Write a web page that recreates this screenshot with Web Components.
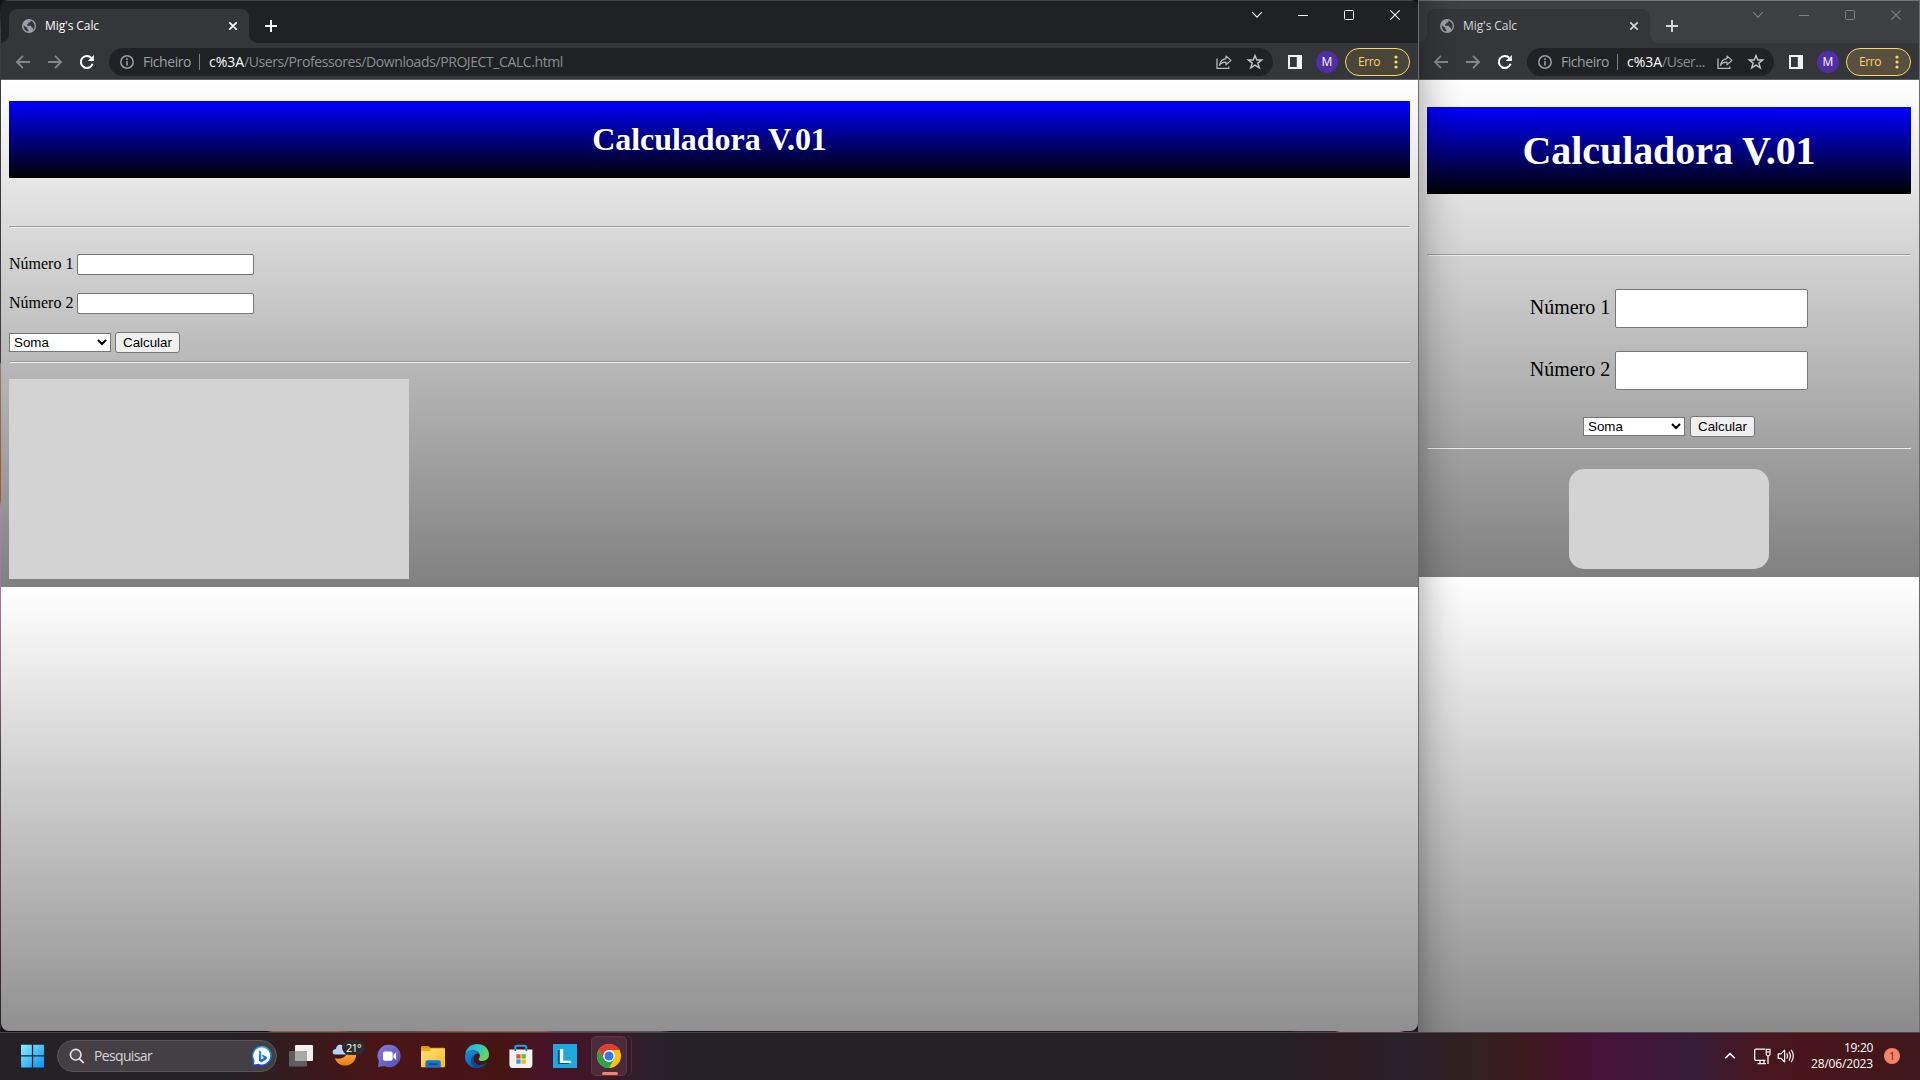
<!DOCTYPE html>
<html lang="pt">
<head>
<meta charset="utf-8">
<title>Mig's Calc</title>
<style>
html,body{margin:0;width:1920px;height:1080px;overflow:hidden}
</style>
</head>
<body>
<desk-top>
  <browser-window>
    <span slot="path">/Users/Professores/Downloads/PROJECT_CALC.html</span>
    <calc-page></calc-page>
  </browser-window>
  <browser-window inactive>
    <span slot="path">/User...</span>
    <calc-page compact></calc-page>
  </browser-window>
  <task-bar slot="bar"></task-bar>
</desk-top>
<script>
const define = (name, html, setup) => {
  const t = document.createElement('template');
  t.innerHTML = html;
  customElements.define(name, class extends HTMLElement {
    constructor() {
      super();
      this.attachShadow({mode: 'open'}).append(t.content.cloneNode(true));
    }
    connectedCallback() { if (setup) setup(this, this.shadowRoot); }
  });
};

/* Text label whose letter spacing is tuned so that it spans a given width. */
define('fit-text', `<style>:host{display:block;white-space:nowrap;flex:none}span{display:inline-block}</style><span><slot></slot></span>`, (el, root) => {
  const target = +el.getAttribute('w');
  const s = root.querySelector('span');
  el.style.width = target + 'px';
  const w = s.getBoundingClientRect().width;
  const n = el.textContent.length;
  if (w && n) s.style.letterSpacing = ((target - w) / n).toFixed(3) + 'px';
});

const ICONS = {
  globe: [14, '<circle cx="7" cy="7" r="7" fill="#9aa0a6"/><path d="M1.6 6.2 4.2 8.2 5.2 8.6 5.2 10 6.4 10.8V12.6A5.7 5.7 0 0 1 1.6 6.2zM8.6 1.6V2.6L7.8 3.6H6.2L6.4 5 5 5.6V6.8H8.8L9.8 8.4 11.2 9.2 11 11.2A5.8 5.8 0 0 0 8.6 1.6z" fill="#35363a"/>'],
  close: [10, '<path d="M1.3 1.3 8.7 8.7M8.7 1.3 1.3 8.7" stroke="currentColor" stroke-width="1.7" fill="none"/>'],
  plus: [12, '<path d="M6 0V12M0 6H12" stroke="currentColor" stroke-width="1.9"/>'],
  chevron: [12, '<path d="M1.2 3.2 6 8.2 10.8 3.2" stroke="currentColor" stroke-width="1.1" fill="none"/>'],
  minimize: [10, '<path d="M0 5.5H10" stroke="currentColor" stroke-width="1"/>'],
  maximize: [10, '<rect x=".5" y=".5" width="9" height="9" rx="1" stroke="currentColor" fill="none"/>'],
  exit: [10, '<path d="M.3.3 9.7 9.7M9.7.3.3 9.7" stroke="currentColor" stroke-width="1.15" fill="none"/>'],
  back: [14, '<path d="M14 7H1M7 .8.9 7 7 13.2" stroke="currentColor" stroke-width="1.8" fill="none"/>'],
  forward: [14, '<path d="M0 7H13M7 .8 13.1 7 7 13.2" stroke="currentColor" stroke-width="1.8" fill="none"/>'],
  reload: [16, '<path d="M13.6 9.8A6 6 0 1 1 12.4 4" stroke="currentColor" stroke-width="2" fill="none"/><path d="M14.9 1V7.1H8.8z" fill="currentColor"/>'],
  info: [14, '<circle cx="7" cy="7" r="6.2" stroke="currentColor" stroke-width="1.5" fill="none"/><path d="M7 6V10.6M7 3.3V4.9" stroke="currentColor" stroke-width="1.6"/>'],
  share: [16, '<path d="M1 4.5V14.4H12.8V12.4" stroke="currentColor" stroke-width="1.3" fill="none"/><path d="M10 2 15 6.4 10 10.8V8.2C7 8.1 5 9 3.4 11.3 4 7.6 6.4 5.2 10 4.6z" stroke="currentColor" stroke-width="1.2" fill="none" stroke-linejoin="round"/>'],
  star: [16, '<path d="M8 1.6 9.8 6H14.7L10.8 9.1 12.3 13.9 8 11.1 3.7 13.9 5.2 9.1 1.3 6H6.2z" stroke="currentColor" stroke-width="1.4" fill="none"/>'],
  panel: [14, '<path fill-rule="evenodd" d="M0 0H14V14H0zM2 2V12H8.8V2z" fill="#f1f3f4"/>'],
  dots: [14, '<g fill="currentColor"><circle cx="7" cy="2" r="1.6"/><circle cx="7" cy="7" r="1.6"/><circle cx="7" cy="12" r="1.6"/></g>'],
  start: [24, '<defs><linearGradient id="g" x1="0" y1="0" x2="1" y2="1"><stop offset="0" stop-color="#8bf0ff"/><stop offset="1" stop-color="#0a8df5"/></linearGradient></defs><path d="M.2.8H10.9V11.3H0V1zM12.2.8H23L23 11.3H12.2zM0 12.6H10.9V23.4H.2zM12.2 12.6H23V23.4H12.2z" fill="url(#g)"/>'],
  search: [16, '<circle cx="6.7" cy="6.7" r="5.3" stroke="#e8e4e8" stroke-width="1.6" fill="#ffffff18"/><path d="M10.6 10.8 14.8 15.2" stroke="#e8e4e8" stroke-width="1.8"/>'],
  bing: [20, '<defs><linearGradient id="g" x1="0" y1="0" x2="0" y2="1"><stop offset="0" stop-color="#2aa5e8"/><stop offset="1" stop-color="#1653df"/></linearGradient></defs><path d="M10.2.8A9.2 9.2 0 1 1 6 18.4L1 19.3 1.8 14.4A9.2 9.2 0 0 1 10.2.8z" fill="#fff" stroke="url(#g)" stroke-width="1.4"/><path d="M7 4.3 9.2 5.2V13.5L12 11.9 10.6 11 9.8 8.5 14 10.3C15.4 11.3 15.1 12.9 13.8 13.7L9.3 16.2 7 14.7z" fill="url(#g)"/>'],
  taskview: [24, '<rect x="6" y="1" width="18" height="16" rx="1" fill="#f0f0f0"/><rect x="0" y="7" width="18" height="15.5" rx="1" fill="#5e5e60"/><path d="M6 7H18V17H6z" fill="#a8a8a9"/>'],
  chat: [24, '<defs><linearGradient id="g" x1="0" y1="0" x2="1" y2="1"><stop offset="0" stop-color="#8a7be0"/><stop offset="1" stop-color="#4f52b2"/></linearGradient></defs><path d="M12.3.8A11.2 11.2 0 1 1 7.4 22L1 23 1.8 17.2A11.2 11.2 0 0 1 12.3.8z" fill="url(#g)"/><rect x="6" y="7.4" width="9.6" height="9.4" rx="1.8" fill="#fff"/><path d="M16.4 10.7 19.2 8.2V16L16.4 13.5z" fill="#fff"/>'],
  folder: [24, '<defs><linearGradient id="g" x1="0" y1="0" x2="1" y2="1"><stop offset="0" stop-color="#ffe27a"/><stop offset="1" stop-color="#f7b92c"/></linearGradient></defs><path d="M0 3.4Q0 2 1.4 2H7.6L10 4.6H0z" fill="#d9930d"/><path d="M0 8V3.8H8.6L10.5 3.8H22.6Q24 3.8 24 5.2V12z" fill="#e9a91c"/><path d="M0 7H8.3L10.5 4.8H24V22.5Q24 23.2 23.2 23.2H.8Q0 23.2 0 22.5z" fill="url(#g)"/><path d="M4.4 23.2V18.4Q4.4 16.2 6.6 16.2H17.6Q19.8 16.2 19.8 18.4V23.2z" fill="#1277cf"/><path d="M7.6 20.2H16.6" stroke="#0a529b" stroke-width="1.8"/>'],
  edge: [24, '<defs><linearGradient id="g" x1="0" y1="0" x2="1" y2=".45"><stop offset="0" stop-color="#27a4e4"/><stop offset=".5" stop-color="#2cc3cf"/><stop offset="1" stop-color="#64d863"/></linearGradient><linearGradient id="h" x1="0" y1="0" x2=".7" y2="1"><stop offset="0" stop-color="#1a8ddb"/><stop offset="1" stop-color="#0c5db5"/></linearGradient></defs><path d="M.2 10.3C1.2 4 6 0 12 0 19.2 0 24 4.8 24 10.6 24 15 20.8 17 17.6 17 14.7 17 13.6 16 13.6 15.2 13.6 14.5 14.9 13.7 14.9 11.5 14.9 8.6 11.5 6.3 7.9 6.3 4 6.3 1.2 8.6.2 10.3z" fill="url(#g)"/><path d="M0 12C.5 8.5 3.8 6.3 7.9 6.3 11 6.3 13.8 8 14.7 10.2 11.6 8.2 8.4 11 8.4 14.5 8.4 19 12.5 22.2 17.3 21.4 15.8 23 13.6 24 11.5 24 4.7 24-.3 18 0 12z" fill="url(#h)"/><path d="M8.8 11.5C7.6 14 8.2 18 11.6 20.2 15 22.2 19.8 20.5 22.4 17.3 20 23 14.5 24.5 10.8 23.9 5.2 22 4.4 14.5 8.8 11.5z" fill="#0a4a92"/>'],
  store: [24, '<path d="M6.3 7V3.5Q6.3 1.7 8 1.7H15.6Q17.3 1.7 17.3 3.5V7" stroke="#1aa5e6" stroke-width="2" fill="none"/><path d="M.4 5.4H23.4V20.4Q23.4 24 19.8 24H4Q.4 24 .4 20.4z" fill="#f1f1f2"/><path d="M6.2 4.4V7M17.3 4.4V7" stroke="#0d74c6" stroke-width="1.6"/><path d="M7.3 10.3h4.3v4.3H7.3z" fill="#e8501f"/><path d="M12.5 10.3h4.3v4.3h-4.3z" fill="#7cb518"/><path d="M7.3 15.4h4.3v4.3H7.3z" fill="#1f9fe4"/><path d="M12.5 15.4h4.3v4.3h-4.3z" fill="#f8b410"/>'],
  chrome: [24, '<circle cx="12" cy="12" r="12" fill="#fbc116"/><path d="M1.6 6A12 12 0 0 1 22.4 6H12L6.8 15z" fill="#e33b2e"/><path d="M1.6 6A12 12 0 0 0 12 24L17.2 15H6.8z" fill="#2ba14b"/><circle cx="12" cy="12" r="5.9" fill="#fff"/><circle cx="12" cy="12" r="4.5" fill="#3178e8"/>'],
  weather: [32, '<defs><linearGradient id="g" x1="0" y1="0" x2="0" y2="1"><stop offset="0" stop-color="#ffc04a"/><stop offset="1" stop-color="#ee7a16"/></linearGradient></defs><path d="M3 18C8 20 16 18 18.5 6 25 9 26 17 21 22.5 15 28 5 26 3 18z" fill="url(#g)"/><path d="M3 14.5Q0 14 .8 11 1.3 9 4 9 4.4 5 8.2 4.6 13 5 14 14.5z" fill="#b9d2f6"/>'],
  up: [12, '<path d="M1.2 8.2 6 3.6 10.8 8.2" stroke="currentColor" stroke-width="1.5" fill="none"/>'],
  screen: [18, '<path d="M12.2 2H3Q1.7 2 1.7 3.3V12Q1.7 13.3 3 13.3H12.4M15 9V17M7 13.5V16.3M11 13.5V16.3M4.5 16.5H13" stroke="currentColor" stroke-width="1.25" fill="none"/><path d="M13.2 2.2H17V7.6L15.8 8.8H14.4L13.2 7.6zM13.2 5H17" stroke="currentColor" stroke-width="1.1" fill="none"/>'],
  volume: [18, '<path d="M1.2 6.8H4L7.6 3.2V15L4 11.3H1.2z" stroke="currentColor" stroke-width="1.2" fill="none" stroke-linejoin="round"/><path d="M9.8 6.4Q11.4 9 9.8 11.8M12 4.6Q14.8 9 12 13.6M14.2 2.8Q18.4 9 14.2 15.2" stroke="currentColor" stroke-width="1.15" fill="none"/>']
};
define('ui-icon', `<style>:host{display:block;flex:none;line-height:0}svg{display:block;overflow:visible}</style><svg></svg>`, (el, root) => {
  const [size, body] = ICONS[el.getAttribute('name')];
  const svg = root.querySelector('svg');
  svg.setAttribute('viewBox', `0 0 ${size} ${size}`);
  svg.setAttribute('width', size);
  svg.setAttribute('height', size);
  svg.innerHTML = body;
});

define('desk-top', `<style>
:host{display:grid;grid-template:1032px 48px/1920px;width:1920px;height:1080px;
 background:linear-gradient(90deg,#100d16 0 267px,#a0544c 272px 340px,#5b4a4c 350px 400px,#b2503f 470px 540px,#5c5357 555px 660px,#1c1720 670px 1290px,#3a2138 1300px 1335px,#a98289 1340px 1400px,#1f1820 1405px 1419px,#55545a 1420px)}
.windows{display:grid;grid-template-columns:1418px 502px;
 background:linear-gradient(#17131c 0 4px,#3c3b40 30px 362px,#8f8078 364px,#90685e 402px,#b25232 465px 500px,#a58ba8 506px,#a77ba6 550px,#af6f94 600px,#826077 690px,#45414c 760px,#5a3540 900px,#252028) 0 0/1px 100% no-repeat,linear-gradient(#17131c,#17131c) 0 0/1418px 10px no-repeat}
</style><div class="windows"><slot></slot></div><slot name="bar"></slot>`);

define('browser-window', `<style>
:host{display:flex;flex-direction:column;box-sizing:border-box;height:1031px;padding:0 0 0 1px;overflow:hidden;
 --strip:#202124;--ctl:#f2f2f2;--tab:240px;--title:#fff;font-family:"Open Sans","Noto Sans",sans-serif;position:relative}
:host([inactive]){--strip:#3c4043;--ctl:#7f8285;--tab:223px;--title:#d5d7d9;padding-right:1px;background:#6d6d6f;height:1032px}
.frame{display:flex;flex-direction:column;flex:1;border-radius:8px;overflow:hidden;background:var(--strip)}
:host([inactive]) .frame{border-radius:0}
.strip{display:flex;height:43px;box-sizing:border-box;border-top:1px solid #45464a;background:var(--strip);align-items:flex-start}
:host([inactive]) .strip{border-top-color:#737679}
.tab{margin:8px 0 0 8px;width:var(--tab);height:34px;box-sizing:border-box;background:#35363a;border-radius:8px 8px 0 0;display:flex;align-items:center;padding:0 11px 0 13px;color:var(--title);position:relative}
.tab::before,.tab::after{content:"";position:absolute;bottom:0;width:8px;height:8px;left:-8px;background:radial-gradient(circle at 0 0,transparent 7.5px,#35363a 8px)}
.tab::after{left:auto;right:-8px;background:radial-gradient(circle at 100% 0,transparent 7.5px,#35363a 8px)}
.tab fit-text{margin-left:9px;font-size:12px;line-height:16px}
.tab .x{margin-left:auto}
.new{margin:19px 0 0 16px;color:var(--title)}
.controls{margin-left:auto;display:flex;align-items:center;height:28px}
.controls ui-icon{width:46px;display:flex;justify-content:center;color:var(--ctl)}
.bar{display:flex;align-items:center;height:37px;box-sizing:border-box;padding:1px 8px 0 0;background:#35363a;color:#85878a;border-bottom:1px solid #606165}
.bar>ui-icon.b{margin-left:15px}.bar>ui-icon.f{margin-left:18px}.bar>ui-icon.r{margin-left:17px;color:#fff}
.omni{margin-left:14px;flex:1;height:28px;border-radius:14px;background:#202124;display:flex;align-items:center;padding:0 10px 0 11px;font-size:14px;line-height:20px;color:#9aa0a6;min-width:0}
.omni .sep{width:1px;height:16px;background:#7d7f83;margin:0 9px 0 8px}
.omni .p{color:#8b8e92}.omni .host{color:#fff}
.omni .sh{margin-left:auto;color:#b7babd}.omni .st{margin-left:15px;color:#c3c5c8}
.panel{margin-left:15px}
.avatar{margin-left:14px;width:22px;height:22px;border-radius:50%;background:#512da8;color:#fff;font-size:12px;line-height:22px;text-align:center}
.err{margin-left:7px;width:65px;height:28px;box-sizing:border-box;border:1px solid #fdd663;border-radius:14px;background:#494639;color:#fdd663;display:flex;align-items:center;padding-left:12px;font-size:12px;line-height:18px}
:host([inactive]) .err{background:#575040}
.err ui-icon{margin-left:9px}
::slotted(calc-page){flex:1}
:host([inactive]) .shade{position:absolute;left:1px;top:0;width:44px;bottom:0;background:linear-gradient(90deg,rgba(0,0,0,.2),rgba(0,0,0,.1) 12px,rgba(0,0,0,.03) 27px,transparent)}
</style>
<div class="frame">
<div class="strip">
 <div class="tab"><ui-icon name="globe"></ui-icon><fit-text w="54">Mig's Calc</fit-text><ui-icon class="x" name="close"></ui-icon></div>
 <ui-icon class="new" name="plus"></ui-icon>
 <div class="controls"><ui-icon name="chevron"></ui-icon><ui-icon name="minimize"></ui-icon><ui-icon name="maximize"></ui-icon><ui-icon name="exit"></ui-icon></div>
</div>
<div class="bar">
 <ui-icon class="b" name="back"></ui-icon><ui-icon class="f" name="forward"></ui-icon><ui-icon class="r" name="reload"></ui-icon>
 <div class="omni"><ui-icon name="info"></ui-icon><fit-text w="48" style="margin-left:9px">Ficheiro</fit-text><i class="sep"></i><fit-text class="host" w="35">c%3A</fit-text><span class="p"></span><ui-icon class="sh" name="share"></ui-icon><ui-icon class="st" name="star"></ui-icon></div>
 <ui-icon class="panel" name="panel"></ui-icon><div class="avatar">M</div>
 <div class="err"><fit-text w="22">Erro</fit-text><ui-icon name="dots"></ui-icon></div>
</div>
<slot></slot>
</div><div class="shade"></div>`, (el, root) => {
  const f = document.createElement('fit-text');
  f.setAttribute('w', el.hasAttribute('inactive') ? 43 : 319);
  f.textContent = el.querySelector('[slot=path]').textContent;
  root.querySelector('.p').append(f);
});

define('rule-line', `<style>:host{display:block;box-sizing:border-box;height:2px;border:1px solid;border-color:#9a9a9a #eee #eee #9a9a9a}</style>`);

define('number-field', `<style>
:host{display:flex;align-items:center;justify-content:var(--just);height:var(--fh);gap:var(--gap)}
label{font:var(--fs)/1.15 "Liberation Serif",serif;color:#000;padding-bottom:var(--lift)}
input{box-sizing:border-box;width:var(--fw);height:var(--fh);margin:0;background:#fff;border:1px solid #767676;border-radius:2px;padding:0}
</style><label><slot></slot></label><input type="text">`);

define('calc-page', `<style>
:host{display:block;box-sizing:border-box;min-height:0;padding:21px 8px 0;overflow:hidden;background:linear-gradient(#fff,#808080) 0 0/100% 507px;
 --just:flex-start;--fh:21px;--fw:177px;--fs:16px;--gap:4px;--lift:0px;font-family:"Liberation Serif",serif}
h1{margin:0 0 48px;height:77px;line-height:77px;font-size:32px;font-weight:bold;letter-spacing:-.04px;color:#fff;text-align:center;background:linear-gradient(#00f,#000)}
.form{margin:26px 0 8px;display:flex;flex-direction:column;gap:18px}
.act{display:flex;align-items:center;justify-content:var(--just);gap:4px}
select,button{margin:0;box-sizing:border-box;font:13.333px "Liberation Sans",Arial,sans-serif;color:#000}
select{width:102px;height:19px;border:1px solid #767676;border-radius:0;background-color:#fff;padding:0}
button{width:65px;height:21px;border:1px solid #767676;border-radius:3px;background:#efefef;padding:0;line-height:19px}
.result{margin-top:16px;width:400px;height:200px;background:#d3d3d3}
:host([compact]){padding-top:27px;background-size:100% 497px;--just:center;--fh:39px;--fw:193px;--fs:20px;--gap:5px;--lift:3px}
:host([compact]) h1{height:87px;line-height:87px;font-size:40px;margin-bottom:60px;letter-spacing:-.07px}
:host([compact]) .form{margin:33px 0 10px;gap:23px}
:host([compact]) .act{margin-top:3px;gap:5px}
:host([compact]) .result{width:200px;height:100px;margin:20px auto 0;border-radius:15px}
</style>
<h1>Calculadora V.01</h1><rule-line></rule-line>
<div class="form"><number-field>Número 1</number-field><number-field>Número 2</number-field>
<div class="act"><select><option>Soma</option></select><button>Calcular</button></div></div>
<rule-line></rule-line><div class="result"></div>`);

define('task-bar', `<style>
:host{display:flex;align-items:center;box-sizing:border-box;height:48px;border-top:1px solid #4b464b;padding:0 20px 1px 21px;color:#fff;font-family:"Open Sans","Noto Sans",sans-serif;
 background:linear-gradient(90deg,#242127 0,#242127 230px,#3a191b 310px,#4a1416 390px,#451514 500px,#46132a 550px,#3c1828 610px,#28202a 660px,#242127 720px,#242127 1270px,#2d1c22 1345px,#29212b 1400px,#33201f 1479px,#3d1a1c 1520px,#45122f 1570px,#44133a 1620px,#381c38 1690px,#451723 1750px,#49151b 1800px,#3e181c 1920px)}
.search{margin-left:12px;width:220px;height:32px;box-sizing:border-box;border:1px solid #5a555a;border-radius:16px;background:#433f44;display:flex;align-items:center;padding:0 4px 0 11px;font-size:14px;line-height:20px;color:#d6d3d6}
.search fit-text{margin-left:9px}.search .bing{margin-left:auto}
.apps{display:flex;align-items:center;margin-left:2px}
.app{width:44px;height:44px;display:flex;align-items:center;justify-content:center;position:relative}
.app.w{left:3px}
.badge{position:absolute;left:16px;top:6px;width:23px;height:15px;border-radius:8px;background:#2c2c2c;font-size:11px;line-height:15px;display:flex;justify-content:center}
.l{width:24px;height:24px;background:#1fa8dc;font:bold 21px/24px "Liberation Sans",sans-serif;text-align:center;text-shadow:-2px 1px 0 #0a4b7a}
.app.on{width:36px;height:40px;box-sizing:border-box;border:1px solid #5b3a46;border-radius:5px;background:#4b2a39;margin-left:4px}
.stack{width:4px;height:38px;border:1px solid #4f303c;border-left:0;border-radius:0 5px 5px 0}
.on::after{content:"";position:absolute;left:10px;bottom:0;width:16px;height:3px;border-radius:2px;background:#f5836b}
.tray{margin-left:auto;display:flex;align-items:center}
.clock{margin-left:15px;width:63px;display:flex;flex-direction:column;align-items:flex-end;font-size:12px;line-height:16px}
.n{margin-left:11px;width:16px;height:16px;border-radius:50%;background:#f5836b;color:#4b1a18;font-size:10px;line-height:16px;text-align:center}
</style>
<ui-icon name="start"></ui-icon>
<div class="search"><ui-icon name="search"></ui-icon><fit-text w="58">Pesquisar</fit-text><ui-icon class="bing" name="bing"></ui-icon></div>
<div class="apps">
<div class="app"><ui-icon name="taskview"></ui-icon></div>
<div class="app w"><ui-icon name="weather"></ui-icon><div class="badge"><fit-text w="15">21°</fit-text></div></div>
<div class="app"><ui-icon name="chat"></ui-icon></div>
<div class="app"><ui-icon name="folder"></ui-icon></div>
<div class="app"><ui-icon name="edge"></ui-icon></div>
<div class="app"><ui-icon name="store"></ui-icon></div>
<div class="app"><div class="l">L</div></div>
<div class="app on"><ui-icon name="chrome"></ui-icon></div><i class="stack"></i>
</div>
<div class="tray"><ui-icon name="up"></ui-icon><ui-icon name="screen" style="margin-left:17px"></ui-icon><ui-icon name="volume" style="margin-left:6px"></ui-icon>
<div class="clock"><fit-text w="29">19:20</fit-text><fit-text w="62">28/06/2023</fit-text></div><div class="n">1</div></div>`);
</script>
</body>
</html>
